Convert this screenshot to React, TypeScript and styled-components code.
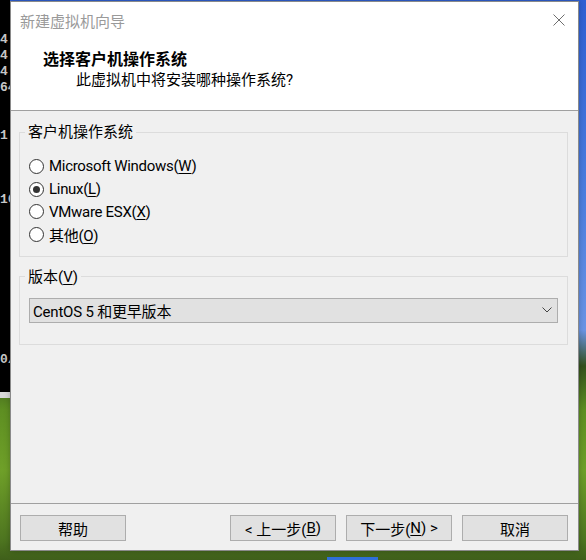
import React from 'react';
import styled, { createGlobalStyle } from 'styled-components';

const GlobalStyle = createGlobalStyle`
  html, body {
    margin: 0;
    padding: 0;
    overflow: hidden;
  }
`;

const UI_FONT = `Roboto, "Noto Sans CJK SC", sans-serif`;

const Desktop = styled.div`
  position: relative;
  width: 586px;
  height: 560px;
  overflow: hidden;
  background: linear-gradient(
    to bottom,
    #2f60d4 0px,
    #4d7fe0 200px,
    #6b95e6 330px,
    #34511c 366px,
    #5e8f22 410px,
    #6fa029 470px,
    #4e7520 540px,
    #3f5f1a 560px
  );
  font-family: ${UI_FONT};
`;

// console window peeking out from behind the dialog
const Terminal = styled.div`
  position: absolute;
  left: 0;
  top: 0;
  width: 10px;
  height: 360px;
  overflow: hidden;
  background: #000;
  border-bottom: 6px solid #d8d8d8;
  padding-top: 32px;
`;

const TermLine = styled.div`
  height: 16px;
  white-space: pre;
  color: #c8c8c8;
  font-family: "Liberation Mono", monospace;
  font-weight: bold;
  font-size: 13px;
  line-height: 16px;
`;

const Taskbtn = styled.div`
  position: absolute;
  left: 327px;
  top: 557px;
  width: 51px;
  height: 3px;
  background: #2f6fd8;
`;

const Dialog = styled.div`
  position: absolute;
  left: 10px;
  top: 1px;
  width: 567px;
  height: 548px;
  border: 1px solid #8a8a8a;
  background: #f0f0f0;
  display: flex;
  flex-direction: column;
  box-shadow: 0 0 6px rgba(0, 0, 0, 0.25);
`;

const Header = styled.div`
  background: #fff;
  border-bottom: 1px solid #a0a0a0;
  height: 108px;
  display: flex;
  flex-direction: column;
`;

const TitleBar = styled.div`
  height: 36px;
  display: flex;
  align-items: center;
  justify-content: space-between;
  padding: 0 13px 0 9px;
`;

const Title = styled.span`
  font-size: 15px;
  color: #9a9a9a;
  font-family: "Noto Sans CJK SC", sans-serif;
`;

const CloseButton = styled.div`
  width: 12px;
  height: 12px;
  display: flex;
`;

const Heading = styled.div`
  margin-top: 9px;
  padding-left: 32px;
  font-size: 16px;
  font-weight: bold;
  line-height: 22px;
  color: #000;
  font-family: "Noto Sans CJK SC", sans-serif;
`;

const SubHeading = styled.div`
  padding-left: 65px;
  font-size: 15px;
  line-height: 22px;
  color: #000;
`;

const Body = styled.div`
  flex: 1;
  padding: 11px 10px 0 8px;
  display: flex;
  flex-direction: column;
  gap: 10px;
`;

const Group = styled.fieldset<{ $padTop: number; $padBottom: number }>`
  margin: 0;
  border: 1px solid #dcdcdc;
  padding: ${p => p.$padTop}px 9px ${p => p.$padBottom}px 9px;
  display: flex;
  flex-direction: column;
`;

const Legend = styled.legend`
  margin-left: -4px;
  padding: 0 3px;
  font-size: 15px;
  line-height: 20px;
  color: #000;
`;

const RadioRow = styled.label`
  height: 22.7px;
  display: flex;
  align-items: center;
  gap: 5px;
  font-size: 15px;
  letter-spacing: -0.3px;
  color: #000;
`;

const RadioCircle = styled.span<{ $checked?: boolean }>`
  width: 13px;
  height: 13px;
  border: 1px solid #333;
  border-radius: 50%;
  background: #fff;
  display: flex;
  align-items: center;
  justify-content: center;
  flex-shrink: 0;

  &::after {
    content: '';
    width: 7px;
    height: 7px;
    border-radius: 50%;
    background: #333;
    display: ${p => (p.$checked ? 'block' : 'none')};
  }
`;

const Key = styled.span`
  text-decoration: underline;
  text-underline-offset: 2px;
`;

const Select = styled.div`
  height: 23px;
  border: 1px solid #adadad;
  background: #e1e1e1;
  display: flex;
  align-items: center;
  justify-content: space-between;
  padding: 0 5px 0 3px;
  font-size: 15px;
  letter-spacing: -0.2px;
  color: #000;
`;

const Footer = styled.div`
  border-top: 1px solid #a0a0a0;
  padding: 11px 10px 9px 9px;
  display: flex;
  align-items: center;
`;

const Button = styled.div<{ $gapLeft?: number }>`
  width: 104px;
  height: 24px;
  border: 1px solid #adadad;
  background: #e1e1e1;
  display: flex;
  align-items: center;
  justify-content: center;
  font-size: 15px;
  color: #000;
  margin-left: ${p => p.$gapLeft ?? 0}px;
`;

const Spacer = styled.div`
  flex: 1;
`;

const termLines = ['4', '4', '4', '64', '', '', '1', '', '', '', '16', '', '', '', '', '', '', '', '', '', '0/'];

const osOptions = [
  { label: 'Microsoft Windows(', key: 'W', checked: false },
  { label: 'Linux(', key: 'L', checked: true },
  { label: 'VMware ESX(', key: 'X', checked: false },
  { label: '其他(', key: 'O', checked: false },
];

export default function App() {
  return (
    <>
      <GlobalStyle />
      <Desktop>
        <Terminal>
          {termLines.map((t, i) => (
            <TermLine key={i}>{t}</TermLine>
          ))}
        </Terminal>
        <Taskbtn />
        <Dialog>
          <Header>
            <TitleBar>
              <Title>新建虚拟机向导</Title>
              <CloseButton>
                <svg width="12" height="12" viewBox="0 0 12 12">
                  <path d="M0.5 0.5 L11.5 11.5 M11.5 0.5 L0.5 11.5" stroke="#6e6e6e" strokeWidth="1" fill="none" />
                </svg>
              </CloseButton>
            </TitleBar>
            <Heading>选择客户机操作系统</Heading>
            <SubHeading>此虚拟机中将安装哪种操作系统?</SubHeading>
          </Header>
          <Body>
            <Group $padTop={13} $padBottom={10}>
              <Legend>客户机操作系统</Legend>
              {osOptions.map(o => (
                <RadioRow key={o.key}>
                  <RadioCircle $checked={o.checked} />
                  <span>
                    {o.label}
                    <Key>{o.key}</Key>)
                  </span>
                </RadioRow>
              ))}
            </Group>
            <Group $padTop={11} $padBottom={21}>
              <Legend>
                版本(<Key>V</Key>)
              </Legend>
              <Select>
                <span>CentOS 5 和更早版本</span>
                <svg width="10" height="6" viewBox="0 0 10 6">
                  <path d="M0.5 0.5 L5 5 L9.5 0.5" stroke="#444" strokeWidth="1" fill="none" />
                </svg>
              </Select>
            </Group>
          </Body>
          <Footer>
            <Button>帮助</Button>
            <Spacer />
            <Button>
              &lt; 上一步(<Key>B</Key>)
            </Button>
            <Button $gapLeft={10}>
              下一步(<Key>N</Key>) &gt;
            </Button>
            <Button $gapLeft={10}>取消</Button>
          </Footer>
        </Dialog>
      </Desktop>
    </>
  );
}
